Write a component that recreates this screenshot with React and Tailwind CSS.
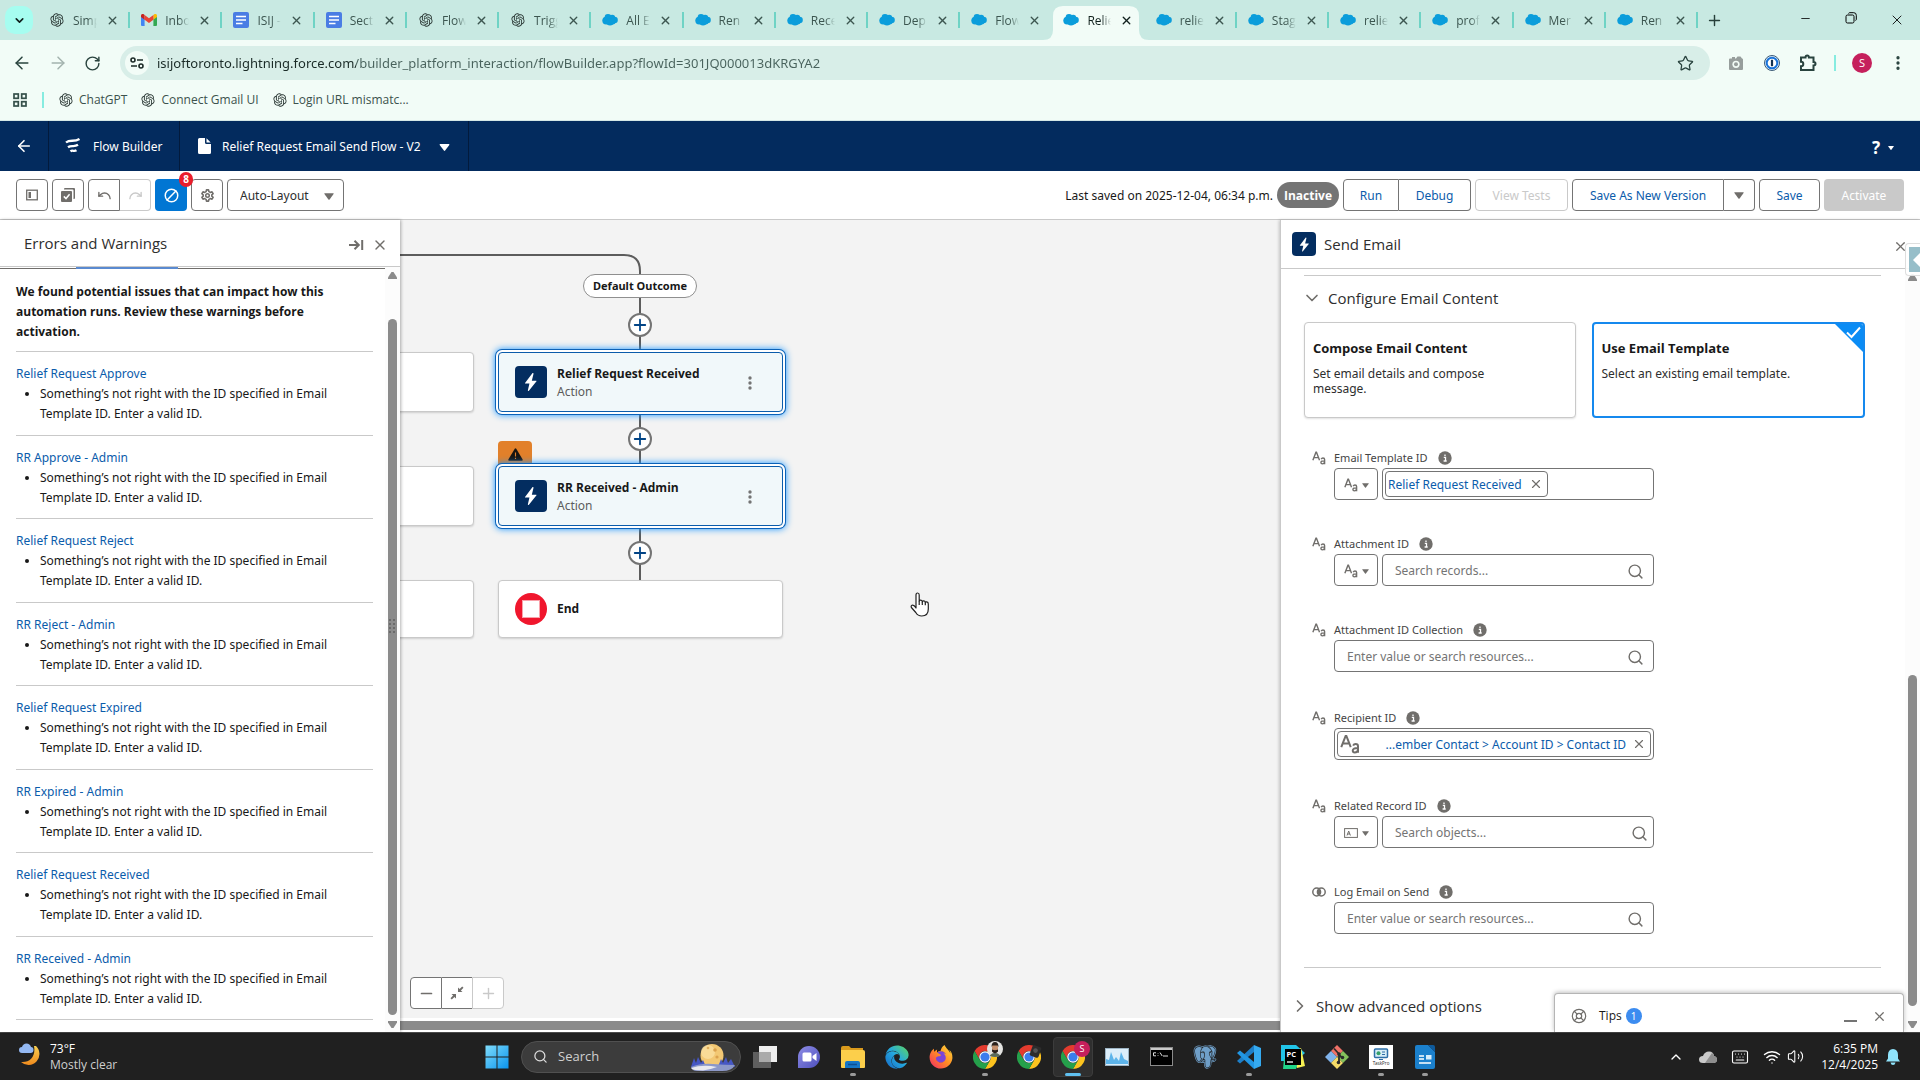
import React from "react";
import {
  ArrowLeft, ArrowRight, RotateCw, X, Plus, Minus, Star, Search, ChevronDown, ChevronRight, ChevronUp,
  Undo, Redo, Ban, LifeBuoy, Wifi, Volume2, Keyboard, MoreVertical,
} from "lucide-react";
import { RiOpenaiFill } from "react-icons/ri";
import { FaEdge, FaFirefoxBrowser } from "react-icons/fa";
import { BiLogoPostgresql } from "react-icons/bi";

const tabs = [
  ["gpt", "Simp"], ["gmail", "Inbo"], ["doc", "ISIJ -"], ["doc", "Sect"], ["gpt", "Flow"], ["gpt", "Trigg"],
  ["sf", "All E"], ["sf", "Ren"], ["sf", "Rece"], ["sf", "Dep"], ["sf", "Flow"], ["sf", "Relie", true],
  ["sf", "relie"], ["sf", "Stag"], ["sf", "relie"], ["sf", "prof"], ["sf", "Mer"], ["sf", "Ren"],
];

const warnings = [
  "Relief Request Approve", "RR Approve - Admin", "Relief Request Reject", "RR Reject - Admin",
  "Relief Request Expired", "RR Expired - Admin", "Relief Request Received", "RR Received - Admin",
];

/* ---------- small glyphs ---------- */

function Cloud() {
  return (
    <svg viewBox="0 0 16 16" className="size-4" fill="#0b9ddb">
      <circle cx="4.2" cy="8.6" r="3.9" /><circle cx="6" cy="5.4" r="3.4" /><circle cx="10.2" cy="5.8" r="3" />
      <circle cx="12.6" cy="8" r="3.2" /><circle cx="8" cy="10" r="3.6" /><circle cx="10.6" cy="9.6" r="3" />
    </svg>
  );
}

function Gmail() {
  return (
    <svg viewBox="0 0 16 12" className="h-3 w-4">
      <path d="M0 2v9a1 1 0 0 0 1 1h2.6V4.7z" fill="#4285f4" />
      <path d="M16 2v9a1 1 0 0 1-1 1h-2.6V4.7z" fill="#34a853" />
      <path d="M12.4 1v4.7L16 3V1.6C16 .2 14.400-.5 13.300.3z" fill="#fbbc04" />
      <path d="M0 3l3.600 2.700V1L2.700.300C1.600-.5 0 .2 0 1.600z" fill="#c5221f" />
      <path d="M3.600 5.700V1L8 4.300 12.400 1v4.700L8 9z" fill="#ea4335" />
    </svg>
  );
}

function Doc() {
  return (
    <svg viewBox="0 0 16 16" className="size-4">
      <rect width="16" height="16" rx="2" fill="#4a7de4" />
      <path d="M3 4.500h10M3 8h10M3 11.500h6.500" stroke="#fff" strokeWidth="1.500" />
    </svg>
  );
}

function Favicon({ kind }) {
  if (kind === "gpt") return <RiOpenaiFill className="size-4 text-[#2b3835]" />;
  if (kind === "gmail") return <Gmail />;
  if (kind === "doc") return <Doc />;
  return <Cloud />;
}

function Caret({ className = "h-2 w-3" }) {
  return (
    <svg viewBox="0 0 12 8" className={className} fill="currentColor">
      <path d="M1 0h10q1 0 .500 1L6.700 7.500q-.700.800-1.400 0L.500 1Q0 0 1 0z" />
    </svg>
  );
}

function Bolt({ className }) {
  return (
    <svg viewBox="0 0 24 24" className={className} fill="#fff">
      <path d="M13.500 2.500 5.500 13q-.400.700.400.700h4.400L8.600 21c-.200.900.600 1.200 1.100.500L18 11.300q.500-.800-.400-.800h-4.700l1.800-7.300c.200-.900-.700-1.400-1.200-.700z" />
    </svg>
  );
}

function TextType({ className = "size-4" }) {
  return (
    <svg viewBox="0 0 16 16" className={className} fill="none" stroke="currentColor" strokeWidth="1.600">
      <path d="M1 10.500 4.500 1.500h.6l3.500 9M2.300 7.600h5" />
      <path d="M10.500 9.300q.6-1.300 2-1.300 1.900 0 1.900 1.800V15M14.400 11.300q-4.200-.2-4.200 1.900 0 1.500 1.600 1.500 2.200 0 2.600-1.900" />
    </svg>
  );
}

function Info() {
  return (
    <svg viewBox="0 0 14 14" className="size-[14px]">
      <circle cx="7" cy="7" r="6.700" fill="#706e6b" />
      <path d="M5.800 6.300h1.700v3.600M5.600 10h3.100M7 3.400v1.500" stroke="#fff" strokeWidth="1.300" fill="none" />
    </svg>
  );
}

function Bookmark({ label }) {
  return (
    <a href="#" className="flex items-center gap-[5px]">
      <RiOpenaiFill className="size-4 text-[#2b3835]" />
      <span>{label}</span>
    </a>
  );
}

/* ---------- browser chrome ---------- */

function Tab({ kind, title, active, divider }) {
  return (
    <div className={"relative flex h-10 min-w-0 flex-1 items-center pl-[11px] " + (active ? "text-[#10201d]" : "text-[#3c5650]")}>
      {active && (
        <svg viewBox="0 0 106 34" className="absolute bottom-0 -left-[9px] h-[34px] w-[106px]" fill="#f2fcf7" preserveAspectRatio="none">
          <path d="M0 34q10 0 10-10V10Q10 0 20 0h66q10 0 10 10v14q0 10 10 10z" />
        </svg>
      )}
      <a href="#" className="relative flex min-w-0 items-center gap-2">
        <span className="flex size-4 shrink-0 items-center"><Favicon kind={kind} /></span>
        <span className="w-[24px] pt-px text-[12px] leading-5 whitespace-nowrap [mask-image:linear-gradient(90deg,#000_60%,transparent)]">{title}</span>
      </a>
      <button aria-label="Close tab" className="relative ml-[9px]"><X size={13} strokeWidth={2.500} /></button>
      {divider && <span className="absolute right-0 top-3 h-4 w-[2px] bg-[#6fd3c5]" />}
    </div>
  );
}

function Browser() {
  return (
    <header className="flex h-[121px] shrink-0 flex-col border-b border-[#d5e8e6] bg-[#f2fcf7] font-['Open_Sans',sans-serif]">
      <div className="flex h-10 bg-[#c8e9e2]">
        <div className="flex w-[38px] shrink-0 items-center justify-center">
          <button aria-label="Search tabs" className="flex h-7 w-7 items-center justify-center rounded-[10px] bg-[#a6fdf0] text-[#10201d]">
            <ChevronDown size={13} strokeWidth={3} />
          </button>
        </div>
        <div className="flex min-w-0 flex-1">
          {tabs.map(([kind, title, active], i) => (
            <Tab key={i} kind={kind} title={title} active={active} divider={!active && i !== 10} />
          ))}
        </div>
        <div className="flex w-[222px] shrink-0 items-center">
          <button aria-label="New tab" className="ml-2 text-[#26403a]"><Plus size={17} /></button>
          <div className="ml-auto flex text-black">
            <button aria-label="Minimize" className="flex w-[46px] justify-center"><Minus size={13} strokeWidth={1.500} /></button>
            <button aria-label="Restore" className="flex w-[46px] justify-center">
              <svg viewBox="0 0 12 12" className="size-3" fill="none" stroke="currentColor"><rect x="1" y="3" width="8" height="8" rx="1.500" /><path d="M3.500 1.500q.3-.8 1.200-.8h4q2.600 0 2.600 2.600v4q0 1-.8 1.200" /></svg>
            </button>
            <button aria-label="Close" className="flex w-[46px] justify-center"><X size={16} strokeWidth={1.300} /></button>
          </div>
        </div>
      </div>
      <div className="flex h-[46px] items-center text-[#29433e]">
        <div className="flex w-[120px] shrink-0 items-center gap-4 pl-3">
          <button aria-label="Back"><ArrowLeft size={20} strokeWidth={1.800} /></button>
          <button aria-label="Forward" className="text-[#a3b3ae]"><ArrowRight size={20} strokeWidth={1.800} /></button>
          <button aria-label="Reload"><RotateCw size={17} strokeWidth={2} /></button>
        </div>
        <div className="flex h-[34px] flex-1 items-center rounded-full bg-[#d8eee8] pr-4 pl-[5px]">
          <button aria-label="Site information" className="flex size-6 items-center justify-center rounded-full bg-[#f2fcf7]">
            <svg viewBox="0 0 14 14" className="size-[14px]" fill="none" stroke="#1c2b28" strokeWidth="1.600"><circle cx="3" cy="4" r="2" /><path d="M7 4h6M1 10h6" /><circle cx="11" cy="10" r="2" /></svg>
          </button>
          <input
            aria-label="Address"
            readOnly
            value="isijoftoronto.lightning.force.com/builder_platform_interaction/flowBuilder.app?flowId=301JQ000013dKRGYA2"
            className="ml-2 min-w-0 flex-1 bg-[linear-gradient(90deg,#1a2b27_199px,#48625c_199px)] bg-clip-text font-['Noto_Sans',sans-serif] text-[13px] leading-5 text-transparent outline-none"
          />
          <button aria-label="Bookmark"><Star size={17} strokeWidth={1.800} /></button>
        </div>
        <div className="flex w-[210px] shrink-0 items-center pl-[18px]">
          <button aria-label="Capture" className="w-4">
            <svg viewBox="0 0 16 16" className="size-4" fill="#979e9c"><path d="M1 4.500Q1 3.500 2 3.500h2V2h3v1.500h1L9.500 1.500h3L14 3.500q1 0 1 1V14q0 1-1 1H2q-1 0-1-1z" /><circle cx="8" cy="9.300" r="3.600" fill="#f2fcf7" /><circle cx="8" cy="9.300" r="2" /></svg>
          </button>
          <button aria-label="Password manager" className="ml-5">
            <svg viewBox="0 0 16 16" className="size-4"><circle cx="8" cy="8" r="7.500" fill="#dcecfb" stroke="#3c5a75" /><circle cx="8" cy="8" r="5.300" fill="#fff" stroke="#1a73d9" strokeWidth="2" /><path d="M8 4.800v6.400" stroke="#14314f" strokeWidth="2.200" /></svg>
          </button>
          <button aria-label="Extensions" className="ml-[18px]">
            <svg viewBox="0 0 20 20" className="size-5" fill="none" stroke="#29433e" strokeWidth="2"><path d="M3 4.500h4.500q0-2 1.700-2t1.700 2H15.500V9q2 0 2 1.700t-2 1.700V17H3v-3.700q2.300 0 2.300-2.300T3 8.700z" /></svg>
          </button>
          <span className="ml-4 h-4 w-[2px] bg-[#86ece0]" />
          <button aria-label="Profile" className="ml-4 flex size-5 items-center justify-center rounded-full bg-[#c5205c] text-[11px] text-white">S</button>
          <button aria-label="Menu" className="ml-[17px]"><MoreVertical size={18} strokeWidth={2.400} /></button>
        </div>
      </div>
      <nav className="flex h-[28px] items-center text-[12px] text-[#3c524d]">
        <svg viewBox="0 0 14 14" className="ml-[13px] size-[14px]" fill="none" stroke="#36504a" strokeWidth="1.700"><rect x="1" y="1" width="4.300" height="4.300" /><rect x="8.700" y="1" width="4.300" height="4.300" /><rect x="1" y="8.700" width="4.300" height="4.300" /><rect x="8.700" y="8.700" width="4.300" height="4.300" /></svg>
        <span className="ml-[15px] h-4 w-[2px] bg-[#86ece0]" />
        <div className="ml-[14px] flex gap-[13px]"><Bookmark label="ChatGPT" /><Bookmark label="Connect Gmail UI" /><Bookmark label="Login URL mismatc..." /></div>
      </nav>
    </header>
  );
}

/* ---------- builder header and toolbar ---------- */

function FlowHeader() {
  return (
    <div className="flex h-[50px] shrink-0 items-stretch bg-[#032b5e] text-[12px] text-white">
      <button aria-label="Back" className="flex w-12 items-center justify-center"><ArrowLeft size={18} strokeWidth={2.200} /></button>
      <div className="flex w-[132px] items-center gap-3 border-x border-[#021a3c] pl-4">
        <svg viewBox="0 0 16 16" className="size-4" fill="none" stroke="#fff" strokeWidth="2.300"><path d="M1 4.500C5 1 9 4.500 14.500 1M3 9.200c3.500-2.500 6 .3 10-2.400M5.500 13.300c2-1.600 3.500.500 6-1" /></svg>
        <span className="pt-px whitespace-nowrap">Flow Builder</span>
      </div>
      <button className="flex items-center border-r border-[#021a3c] pr-[18px] pl-[17px]">
        <svg viewBox="0 0 14 16" className="mr-[11px] h-4 w-[14px]" fill="#fff"><path d="M2.500 0H8v4.500Q8 6 9.500 6H14v8.500q0 1.500-1.500 1.500h-10Q1 16 1 14.500v-13Q1 0 2.500 0zM9.500.3 13.700 4.500H9.500z" /></svg>
        <span className="mr-[18px] pt-px whitespace-nowrap">Relief Request Email Send Flow - V2</span>
        <Caret className="mt-[2px] h-[7px] w-[11px]" />
      </button>
      <button aria-label="Help" className="ml-auto flex items-center gap-2 pt-1 pr-[26px] text-[17px] font-bold">?<Caret className="h-1 w-[6px]" /></button>
    </div>
  );
}

const iconBtn = "flex h-8 w-8 items-center justify-center border border-[#747474] text-[#706e6b]";
const blueBtn = "h-8 border border-[#747474] pt-px text-[12px] text-[#0b5cab] bg-white whitespace-nowrap";

function Toolbar() {
  return (
    <div className="flex h-[49px] shrink-0 items-center border-b border-[#c9c9c9] bg-white px-4">
      <div className="flex items-center gap-1">
        <button aria-label="Toggle toolbox" className={iconBtn + " rounded"}>
          <svg viewBox="0 0 12 12" className="size-3"><rect x=".7" y="1.200" width="10.600" height="9.600" fill="none" stroke="currentColor" strokeWidth="1.300" /><path d="M2.500 3h2.500v6H2.500z" fill="currentColor" /></svg>
        </button>
        <button aria-label="Select elements" className={iconBtn + " rounded"}>
          <svg viewBox="0 0 14 14" className="size-[14px]" fill="currentColor"><path d="M4 0h9q1 0 1 1v9q0 1-1 1h-.500V2.500Q12.500 1.500 11.500 1.500H3V1q0-1 1-1z" /><rect y="3" width="11" height="11" rx="1" /><path d="M2.800 8.400 5 10.600 8.600 6.300" fill="none" stroke="#fff" strokeWidth="1.500" /></svg>
        </button>
        <div className="flex">
          <button aria-label="Undo" className={iconBtn + " rounded-l"}><Undo size={15} strokeWidth={2.200} /></button>
          <button disabled aria-label="Redo" className="flex h-8 w-[31px] items-center justify-center rounded-r border border-l-0 border-[#c9c9c9] text-[#c9c9c9]"><Redo size={15} strokeWidth={2.200} /></button>
        </div>
        <button aria-label="Errors and warnings, 8" className="relative flex h-8 w-8 items-center justify-center rounded bg-[#0176d3] text-white">
          <Ban size={15} strokeWidth={2.400} className="rotate-90" />
          <span className="absolute -top-[7px] -right-[6px] flex h-[15px] w-[14px] items-center justify-center rounded-full bg-[#ea1d2c] text-[10px] font-bold">8</span>
        </button>
        <button aria-label="Settings" className={iconBtn + " rounded"}>
          <svg viewBox="0 0 16 16" className="size-[15px]" fill="none" stroke="currentColor">
            <path d="M6.900 1h2.200l.4 1.900 1.500.8 1.800-.6 1.200 1.900-1.400 1.300v1.400l1.400 1.300-1.200 1.900-1.800-.6-1.500.8L9.100 13H6.900l-.4-1.900-1.500-.8-1.800.6L2 9l1.400-1.300V6.300L2 5l1.200-1.900 1.800.6 1.500-.8z" strokeWidth="1.700" strokeLinejoin="round" transform="translate(0 1)" /><circle cx="8" cy="8" r="1.900" strokeWidth="1.600" />
          </svg>
        </button>
        <div className="relative flex items-center text-[#706e6b]">
          <select aria-label="Layout" className="h-8 w-[117px] appearance-none rounded border border-[#747474] bg-white pt-px pl-3 text-[12px] text-[#2e2e2e]"><option>Auto-Layout</option></select>
          <Caret className="pointer-events-none absolute top-[14px] right-[10px] h-[7px] w-[10px]" />
        </div>
      </div>
      <div className="ml-auto flex items-center gap-1">
        <span className="pt-px text-[12px] whitespace-nowrap text-[#181818]">Last saved on 2025-12-04, 06:34 p.m.</span>
        <span className="flex h-[26px] w-[62px] items-center justify-center rounded-full bg-[#747474] pt-px font-['Open_Sans',sans-serif] text-[12px] font-bold text-white">Inactive</span>
        <div className="flex">
          <button className={blueBtn + " w-[56px] rounded-l"}>Run</button>
          <button className={blueBtn + " w-[72px] rounded-r border-l-0"}>Debug</button>
        </div>
        <button disabled className="h-8 w-[93px] rounded border border-[#c9c9c9] pt-px text-[12px] whitespace-nowrap text-[#c9c9c9]">View Tests</button>
        <div className="flex">
          <button className={blueBtn + " w-[152px] rounded-l"}>Save As New Version</button>
          <button aria-label="More save options" className="flex h-8 w-[31px] items-center justify-center rounded-r border border-l-0 border-[#747474] text-[#706e6b]"><Caret className="h-[7px] w-[10px]" /></button>
        </div>
        <button className={blueBtn + " w-[61px] rounded"}>Save</button>
        <button disabled className="h-8 w-20 rounded bg-[#c9c9c9] pt-px text-[12px] text-white">Activate</button>
      </div>
    </div>
  );
}

/* ---------- left panel ---------- */

function Tri({ down }) {
  return (
    <svg viewBox="0 0 9 7" className="h-[7px] w-[9px]" fill="#8b8b8b">{down ? <path d="M0 0h9v1.500L5.500 7h-2L0 1.500z" /> : <path d="M0 7h9V5.500L5.500 0h-2L0 5.500z" />}</svg>
  );
}

function Errors() {
  return (
    <aside className="z-10 flex w-[400px] shrink-0 flex-col bg-white shadow-[1px_0_3px_rgba(0,0,0,0.3)]">
      <div className="flex h-[47px] shrink-0 items-center border-b border-[#c9c9c9] pr-3 pl-6">
        <h2 className="font-['Open_Sans',sans-serif] text-[15px] text-[#2e2e2e]">Errors and Warnings</h2>
        <button aria-label="Dock panel" className="ml-auto text-[#706e6b]">
          <svg viewBox="0 0 15 12" className="mt-1 h-3 w-[15px]" fill="none" stroke="currentColor" strokeWidth="2"><path d="M0 6h9.500M5.500 1.700 9.800 6l-4.300 4.300M13.200 1v10" /></svg>
        </button>
        <button aria-label="Close panel" className="ml-2 text-[#706e6b]"><X size={16} strokeWidth={2} className="mt-1" /></button>
      </div>
      <div className="flex min-h-0 flex-1">
        <div className="flex min-w-0 flex-1 flex-col">
          <div className="flex h-[2px] w-full items-center"><span className="h-px w-[76px] bg-[#706e6b]" /><span className="h-[2px] w-[102px] bg-[#5a8ad0]" /><span className="h-px flex-1 bg-[#706e6b]" /></div>
          <p className="mb-[9px] ml-4 w-[330px] pt-[13px] font-['Open_Sans',sans-serif] text-[12px] leading-[20px] font-bold text-[#181818]">We found potential issues that can impact how this automation runs. Review these warnings before activation.</p>
          <ul className="mr-3 ml-4 flex min-h-0 flex-1 flex-col border-b border-[#c9c9c9] text-[12px] leading-5">
            {warnings.map((w) => (
              <li key={w} className="min-h-0 flex-1 border-t border-[#c9c9c9] pt-3">
                <a href="#" className="block text-[#0b5cab]">{w}</a>
                <ul className="list-disc pl-6 text-[#181818]"><li className="w-[310px]">Something’s not right with the ID specified in Email Template ID. Enter a valid ID.</li></ul>
              </li>
            ))}
          </ul>
          <div className="h-3" />
        </div>
        <div className="flex w-[15px] flex-col items-center bg-[#fcfcfc] pt-[5px] pb-1">
          <Tri />
          <div className="mt-10 mb-[6px] flex w-[9px] flex-1 flex-col items-center rounded-full bg-[#8b8b8b]">
            <svg viewBox="0 0 7 14" className="mt-[300px] h-[14px] w-[7px]" fill="#6a6a6a"><path d="M0 0h2v2H0zM4 0h2v2H4zM0 4h2v2H0zM4 4h2v2H4zM0 8h2v2H0zM4 8h2v2H4zM0 12h2v2H0zM4 12h2v2H4z" /></svg>
          </div>
          <Tri down />
        </div>
      </div>
    </aside>
  );
}

/* ---------- canvas ---------- */

function AddNode({ className }) {
  return (
    <button aria-label="Add element" className={"absolute left-[228px] flex size-6 items-center justify-center rounded-full border-2 border-[#747474] bg-white text-[#014486] " + className}><Plus size={18} strokeWidth={2.400} /></button>
  );
}

function ActionNode({ title, className }) {
  return (
    <div className={"absolute left-[98px] flex h-[60px] w-[285px] items-center rounded border border-[#0b5cab] bg-[#f1f8fa] pl-4 shadow-[0_0_0_2px_#fff,0_0_0_3px_#0b62b8,0_0_7px_3px_#1b96ff] " + className}>
      <span className="flex size-8 items-center justify-center rounded bg-[#032d60]"><Bolt className="size-[22px]" /></span>
      <div className="ml-[10px] pt-[2px] leading-[18px]">
        <div className="font-['Open_Sans',sans-serif] text-[12px] font-bold text-[#181818]">{title}</div>
        <div className="text-[12px] text-[#5c5c5c]">Action</div>
      </div>
      <button aria-label="More actions" className="mr-[30px] ml-auto pt-[2px]"><svg viewBox="0 0 4 14" className="h-[14px] w-1" fill="#747474"><circle cx="2" cy="2" r="1.700" /><circle cx="2" cy="7" r="1.700" /><circle cx="2" cy="12" r="1.700" /></svg></button>
    </div>
  );
}

const plainNode = "absolute rounded border border-[#c9c9c9] bg-white shadow-[0_1px_2px_rgba(0,0,0,0.15)] ";

function Canvas() {
  return (
    <main className="flex min-w-0 flex-1 flex-col">
      <div className="relative min-h-0 flex-1 overflow-hidden bg-[#f3f3f3]">
        <svg className="absolute top-0 left-0 h-[400px] w-[400px]" viewBox="0 0 400 400" fill="none" stroke="#5c5c5c" strokeWidth="2"><path d="M0 35H224Q240 35 240 51V362" /></svg>
        <div className={plainNode + "top-[132px] -left-[209px] h-[60px] w-[283px]"} />
        <div className={plainNode + "top-[246px] -left-[209px] h-[60px] w-[283px]"} />
        <div className={plainNode + "top-[360px] -left-[209px] h-[58px] w-[283px]"} />
        <div className="absolute top-[54px] left-[183px] flex h-6 w-[114px] items-center justify-center rounded-full border border-[#8f8f8f] bg-white pt-px text-[11px] font-bold whitespace-nowrap text-[#181818]">Default Outcome</div>
        <AddNode className="top-[93px]" />
        <AddNode className="top-[207px]" />
        <AddNode className="top-[321px]" />
        <div className="absolute top-[221px] left-[98px] flex h-[26px] w-[34px] justify-center rounded-t bg-[#e2802a] pt-[7px]">
          <svg viewBox="0 0 16 14" className="h-[13px] w-[15px]"><path d="M7.200.800 .300 12.500Q0 13.600 1 13.600h14q1 0 .700-1.100L8.800.800Q8-.300 7.200.800z" fill="#181410" /><path d="M8 4.800v4.400M8 10.400v1.500" stroke="#e2802a" strokeWidth="1.200" /></svg>
        </div>
        <ActionNode title="Relief Request Received" className="top-[132px]" />
        <ActionNode title="RR Received - Admin" className="top-[246px]" />
        <div className={plainNode + "top-[360px] left-[98px] flex h-[58px] w-[285px] items-center pl-4"}>
          <span className="flex size-8 items-center justify-center rounded-full bg-[#f0162d]"><span className="size-[18px] border border-[#f9a3ab] bg-white" /></span>
          <span className="ml-[10px] font-['Open_Sans',sans-serif] text-[12px] font-bold text-[#181818]">End</span>
        </div>
        <svg viewBox="0 0 20 25" className="absolute top-[372px] left-[510px] h-[25px] w-5" fill="#fff" stroke="#222" strokeWidth="1.200" strokeLinejoin="round"><path d="M6 14V3q0-2 1.600-2T9.200 3v6.500q.2-1.500 1.600-1.300 1.500.2 1.500 1.800.2-1.300 1.600-1.100 1.400.2 1.400 1.800.2-1 1.500-.8 1.500.3 1.500 2V17q0 7-6.500 7-4 0-6-3.500L1.400 15.500q-.7-1.500.6-2.200Q4 12.600 6 16z" /><path d="M12.300 10v3M15.300 10.700v2.500M9.200 9.500V13" /></svg>
        <div className="absolute bottom-[9px] left-[10px] flex">
          <button aria-label="Zoom out" className={iconBtn + " rounded-l bg-white"}><Minus size={17} strokeWidth={2.400} /></button>
          <button aria-label="Zoom to fit" className="flex h-8 w-[30px] items-center justify-center border-y border-[#747474] bg-white text-[#706e6b]">
            <svg viewBox="0 0 14 14" className="size-[14px]" fill="currentColor"><path d="M8 1.500V6h4.500L10.900 4.400 13.500 1.800 12.200.5 9.600 3.100zM6 12.500V8H1.500l1.600 1.600L.5 12.200l1.300 1.300 2.600-2.600z" /></svg>
          </button>
          <button disabled aria-label="Zoom in" className="flex h-8 w-8 items-center justify-center rounded-r border border-[#c9c9c9] bg-white text-[#c9c9c9]"><Plus size={17} strokeWidth={2} /></button>
        </div>
      </div>
      <div className="h-[14px] shrink-0 bg-white pt-[3px] pb-[2px]"><div className="h-full bg-[#8b8b8b]" /></div>
    </main>
  );
}

/* ---------- right panel ---------- */

const box = "flex h-8 items-center rounded border border-[#747474] bg-white";

function FieldLabel({ id, label, toggle }) {
  return (
    <div className="flex h-5 items-center text-[#706e6b]">
      <span className="flex w-[22px] shrink-0 items-center">
        {toggle ? <svg viewBox="0 0 14 12" className="h-3 w-[14px]" fill="none" stroke="currentColor" strokeWidth="1.500"><circle cx="4.700" cy="6" r="3.900" /><circle cx="9.300" cy="6" r="3.900" /><path d="M7 3.500v5" strokeWidth="2.500" /></svg> : <TextType className="size-[14px]" />}
      </span>
      <label htmlFor={id} className="text-[11px] text-[#444]">{label}</label>
      <button aria-label={"About " + label} className="ml-[10px]"><Info /></button>
    </div>
  );
}

function TypeButton({ record }) {
  return (
    <button aria-label="Choose value type" aria-haspopup="listbox" className={box + " w-11 shrink-0 justify-center gap-1 pt-[2px] text-[#706e6b]"}>
      {record ? <svg viewBox="0 0 14 10" className="h-[10px] w-[14px]" fill="none" stroke="currentColor"><rect x=".6" y=".6" width="12.800" height="8.800" /><path d="M3 7.500 4.700 3l1.700 4.500M3.500 6h2.400" /></svg> : <TextType className="size-[14px]" />}
      <Caret className="h-[5px] w-[7px]" />
    </button>
  );
}

function Field({ id, label, toggle, type, placeholder, pill, full, className }) {
  return (
    <div className={"flex flex-col " + className}>
      <FieldLabel id={id} label={label} toggle={toggle} />
      <div className="ml-[22px] flex w-80 gap-1">
        {type && <TypeButton record={type === "record"} />}
        <div className={box + " min-w-0 flex-1 " + (pill ? "px-[2px]" : "pl-3 " + (type === "record" ? "pr-[5px]" : "pr-[9px]"))}>
          {pill ? (
            <>
              <span className={"flex h-[26px] items-center rounded border border-[#747474] text-[12px] whitespace-nowrap text-[#0b5cab] " + (full ? "w-full shrink-0 pr-[4px] pl-[2px]" : "w-[163px] shrink-0 pr-[4px] pl-[2px]")}>
                {full && <TextType className="size-5 text-[#706e6b]" />}
                <span className={full ? "ml-auto pt-px" : "pt-px"}>{pill}</span>
                <button aria-label="Remove" className={full ? "ml-[6px] text-[#706e6b]" : "ml-auto text-[#706e6b]"}><X size={14} strokeWidth={2} /></button>
              </span>
              <input id={id} className={full ? "w-0" : "min-w-0 flex-1 outline-none"} />
            </>
          ) : (
            <>
              <input id={id} placeholder={placeholder} className="min-w-0 flex-1 pt-px text-[12px] outline-none placeholder:text-[#747474]" />
              <Search size={17} strokeWidth={2} className="mt-[3px] text-[#706e6b]" />
            </>
          )}
        </div>
      </div>
    </div>
  );
}

function Choice({ title, text, checked }) {
  return (
    <label className={"relative flex h-24 flex-1 flex-col overflow-hidden rounded bg-white pl-2 " + (checked ? "border-2 border-[#1589ee] pt-[14px]" : "border border-[#c9c9c9] pt-[15px] shadow-[0_1px_2px_rgba(0,0,0,0.12)]")}>
      <input type="radio" name="content" defaultChecked={checked} className="sr-only" />
      <span className="font-['Open_Sans',sans-serif] text-[13px] leading-5 font-bold text-[#181818]">{title}</span>
      <span className="mt-2 w-[200px] text-[12px] leading-[15px] whitespace-normal text-[#2e2e2e]">{text}</span>
      {checked && (
        <svg viewBox="0 0 28 28" className="absolute top-0 right-0 size-7"><path d="M0 0h28v28z" fill="#0a8cf5" /><path d="m12 8.500 4.500 4.500L25 3.500" fill="none" stroke="#fff" strokeWidth="2" /></svg>
      )}
    </label>
  );
}

function SendEmail() {
  return (
    <aside className="relative z-10 flex w-[640px] shrink-0 flex-col border-l border-[#c9c9c9] bg-white shadow-[-1px_0_3px_rgba(0,0,0,0.2)]">
      <div className="flex h-[49px] shrink-0 items-center border-b border-[#c9c9c9] pr-3 pl-[11px]">
        <span className="flex size-6 items-center justify-center rounded bg-[#032d60]"><Bolt className="size-[17px]" /></span>
        <h2 className="ml-2 font-['Open_Sans',sans-serif] text-[15px] text-[#2e2e2e]">Send Email</h2>
        <button aria-label="Close" className="mt-1 ml-auto text-[#706e6b]"><X size={15} strokeWidth={2} /></button>
      </div>
      <div className="flex min-h-0 flex-1">
        <div className="min-w-0 flex-1 overflow-hidden pt-[6px] pl-[23px]">
          <section className="mr-6 border-y border-[#c9c9c9] pb-[33px]">
            <button className="mt-[10px] flex h-6 items-center gap-1 font-['Open_Sans',sans-serif] text-[15px] text-[#2e2e2e]"><ChevronDown size={20} strokeWidth={2} className="-ml-[2px] text-[#706e6b]" /><span className="ml-[2px]">Configure Email Content</span></button>
            <fieldset className="mt-3 mr-4 flex gap-4">
              <Choice title="Compose Email Content" text="Set email details and compose message." />
              <Choice title="Use Email Template" text="Select an existing email template." checked />
            </fieldset>
            <div className="mt-[30px] ml-2 flex flex-col">
              <Field id="tpl" label="Email Template ID" type="text" pill="Relief Request Received" className="mb-[34px]" />
              <Field id="att" label="Attachment ID" type="text" placeholder="Search records..." className="mb-[34px]" />
              <Field id="col" label="Attachment ID Collection" placeholder="Enter value or search resources..." className="mb-9" />
              <Field id="rec" label="Recipient ID" pill="...ember Contact > Account ID > Contact ID" full className="mb-9" />
              <Field id="rel" label="Related Record ID" type="record" placeholder="Search objects..." className="mb-[34px]" />
              <Field id="log" label="Log Email on Send" toggle placeholder="Enter value or search resources..." className="" />
            </div>
          </section>
          <button className="mt-[26px] -ml-[14px] flex h-6 items-center font-['Open_Sans',sans-serif] text-[15px] text-[#2e2e2e]"><ChevronRight size={20} strokeWidth={2} className="text-[#706e6b]" /><span className="ml-[6px]">Show advanced options</span></button>
        </div>
        <div className="flex w-[15px] flex-col items-center bg-[#fcfcfc] pt-[5px] pb-1">
          <Tri />
          <div className="h-[394px] shrink" />
          <div className="mb-[15px] w-[9px] flex-1 rounded-full bg-[#8b8b8b]" />
          <Tri down />
        </div>
      </div>
      <div className="absolute right-4 bottom-0 flex h-[39px] w-[350px] items-center rounded-t border border-b-0 border-[#b5b5b5] bg-white pt-[6px] pl-4 shadow-[0_-1px_4px_rgba(0,0,0,0.25)]">
        <LifeBuoy size={16} strokeWidth={1.800} className="text-[#706e6b]" />
        <span className="ml-3 font-['Open_Sans',sans-serif] text-[12px] text-[#181818]">Tips</span>
        <span className="ml-1 flex size-4 items-center justify-center rounded-full bg-[#3c8cf0] text-[10px] text-white">1</span>
        <button aria-label="Minimize tips" className="ml-auto h-3 w-[13px] border-b-2 border-[#747474]" />
        <button aria-label="Close tips" className="mr-4 ml-[15px] text-[#706e6b]"><X size={15} strokeWidth={2} /></button>
      </div>
      <button aria-label="Expand side tray" className="absolute top-[23px] right-0 h-[33px] w-[15px] rounded-l border border-r-0 border-[#dedede] bg-white/90 py-[3px] pl-[3px]">
        <span className="flex h-full items-center justify-end bg-[#97bec9]"><svg viewBox="0 0 8 14" className="h-[14px] w-2" fill="#fff"><path d="M8 0v14L1 7z" /></svg></span>
      </button>
    </aside>
  );
}

/* ---------- taskbar ---------- */

function Chrome() {
  return (
    <svg viewBox="0 0 24 24" className="size-6">
      <path d="M1.600 6A12 12 0 0 1 22.400 6H12A6 6 0 0 0 6.800 15z" fill="#e33b2e" />
      <path d="M22.400 6A12 12 0 0 1 12 24L17.200 15A6 6 0 0 0 12 6z" fill="#fcc31e" />
      <path d="M12 24A12 12 0 0 1 1.600 6L6.800 15A6 6 0 0 0 17.200 15z" fill="#25a04b" />
      <circle cx="12" cy="12" r="5.800" fill="#fff" /><circle cx="12" cy="12" r="4.600" fill="#3b7ded" />
    </svg>
  );
}

function AppButton({ label, run, active, children }) {
  return (
    <button aria-label={label} className="relative flex h-12 w-11 items-center justify-center">
      {active && <span className="absolute top-1 left-[2px] h-10 w-10 rounded border border-[#3c3c3c] bg-[#2f2f2f]" />}
      <span className="relative">{children}</span>
      {run && <span className="absolute bottom-[5px] h-[3px] w-[6px] rounded-full bg-[#9a9a9a]" />}
      {active && <span className="absolute bottom-[5px] h-[3px] w-4 rounded-full bg-[#60c0f0]" />}
    </button>
  );
}

function Taskbar() {
  return (
    <footer className="flex h-12 shrink-0 items-center border-t border-[#4a4a4a] bg-[#202020] font-['Open_Sans',sans-serif] text-[12px] text-white">
      <div className="flex flex-1 items-center pl-[18px]">
        <svg viewBox="0 0 24 24" className="-mt-1 size-6">
          <defs><linearGradient id="moon" x1="0" y1="0" x2="0" y2="1"><stop offset="0" stopColor="#f7cf52" /><stop offset="1" stopColor="#ef8a1d" /></linearGradient></defs>
          <path d="M18 3a10.500 10.500 0 1 1-15 16C12 20 18 13 16 3z" fill="url(#moon)" />
          <path d="M4 10q-3 0-3-3t3-3q1-3.500 4.500-3.500T13 4q2.500.200 2.500 3t-3 3z" fill="#93b8f3" />
        </svg>
        <div className="ml-2 text-[12px] leading-4"><div>73°F</div><div className="text-[#cfcfcf]">Mostly clear</div></div>
      </div>
      <div className="ml-1 flex items-center">
        <AppButton label="Start">
          <svg viewBox="0 0 24 24" className="size-6"><defs><linearGradient id="win" x1="0" y1="0" x2="1" y2="1"><stop offset="0" stopColor="#7fdcfb" /><stop offset="1" stopColor="#0a94ee" /></linearGradient></defs><path d="M.5.500h11v11H.5zM12.500.500h11v11h-11zM.5 12.500h11v11H.5zM12.500 12.500h11v11h-11z" fill="url(#win)" /></svg>
        </AppButton>
        <label className="mx-[2px] flex h-8 w-[220px] items-center rounded-full border border-[#505050] bg-[#3c3c3c] pr-1 pl-[11px]">
          <Search size={15} strokeWidth={2} className="text-[#dedede]" />
          <input aria-label="Search" placeholder="Search" className="ml-[10px] min-w-0 flex-1 bg-transparent text-[13px] outline-none placeholder:text-[#d0d0d0]" />
          <svg viewBox="0 0 46 28" className="h-7 w-[46px]">
            <circle cx="22" cy="12.500" r="11.500" fill="#f3c873" /><circle cx="18" cy="9" r="7" fill="#fbe3a6" opacity=".7" /><circle cx="25" cy="7" r="1.800" fill="#dba24f" /><circle cx="27" cy="14" r="1.600" fill="#dba24f" /><circle cx="18" cy="5" r="1.300" fill="#e0ad5c" />
            <path d="M1 24 4 15l2 5 2-6 3 6 2-3 3 7zM28 24l3-8 2 4 3-6 2 6 3-4 4 8z" fill="#4657c4" />
            <path d="M1 24q10-4 22-3t22 1q-3 6-13 6H7q-5 0-6-4z" fill="#8c98c8" /><path d="M1 25q12-4 26-1-8 3-14 3.500L5 27q-3-.500-4-2z" fill="#e9e9ee" />
          </svg>
        </label>
        <AppButton label="Task view"><svg viewBox="0 0 24 24" className="size-6"><rect x="6" y="1" width="18" height="16" fill="#eee" /><rect x="0" y="7" width="18" height="16" fill="#666" opacity=".9" /><rect x="6" y="7" width="12" height="10" fill="#aaa" /></svg></AppButton>
        <AppButton label="Chat"><svg viewBox="0 0 24 24" className="size-6"><defs><linearGradient id="chat" x1="0" y1="0" x2="1" y2="1"><stop offset="0" stopColor="#8f8de6" /><stop offset="1" stopColor="#4d4fbd" /></linearGradient></defs><path d="M12 1a11 11 0 1 1 0 22H1V12A11 11 0 0 1 12 1z" fill="url(#chat)" /><rect x="5.500" y="7.500" width="9" height="9" rx="1.500" fill="#fff" /><path d="m15.500 11 4-3v8l-4-3z" fill="#fff" /></svg></AppButton>
        <AppButton label="File Explorer" run><svg viewBox="0 0 24 24" className="size-6"><path d="M0 3q0-2 2-2h6l2 2h12v5H0z" fill="#d99a1c" /><path d="M0 5h22q2 0 2 2v15q0 1-1 1H1q-1 0-1-1z" fill="#fccf4b" /><path d="M4 23v-5q0-2 2-2h11q2 0 2 2v5z" fill="#1576c6" /><path d="M7 19.500h9" stroke="#0c4f93" strokeWidth="1.500" /></svg></AppButton>
        <AppButton label="Edge"><svg width="0" height="0" className="absolute"><defs><linearGradient id="edge" x1="0" y1="1" x2="1" y2="0"><stop offset="0" stopColor="#1668c4" /><stop offset=".5" stopColor="#25a8e0" /><stop offset="1" stopColor="#5fd85a" /></linearGradient><linearGradient id="fox" x1="1" y1="0" x2="0" y2="1"><stop offset="0" stopColor="#ffdf3c" /><stop offset=".5" stopColor="#ff8a25" /><stop offset="1" stopColor="#f4256a" /></linearGradient></defs></svg><FaEdge className="size-6" fill="url(#edge)" /></AppButton>
        <AppButton label="Firefox"><span className="absolute top-[6px] left-[6px] size-3 rounded-full bg-[#7a44d8]" /><FaFirefoxBrowser className="relative size-6" fill="url(#fox)" /></AppButton>
        <AppButton label="Chrome profile 1" run><Chrome /><svg viewBox="0 0 16 16" className="absolute -top-1 left-[14px] size-4"><circle cx="8" cy="8" r="8" fill="#e4e4e2" /><path d="M2.500 14.500Q8 9 13.500 14.500 8 17.500 2.500 14.500z" fill="#5a6a5a" /><rect x="5" y="3" width="6" height="9" rx="3" fill="#c38e6b" /><path d="M4.500 6q0-5 3.500-5t3.500 5L10.500 4.500h-5zM5 8.500q3 1.500 6 0v2Q8 14 5 10.500z" fill="#2a211c" /></svg></AppButton>
        <AppButton label="Chrome profile 2"><Chrome /><svg viewBox="0 0 14 14" className="absolute top-0 left-3 size-[13px]"><rect x="2" y="1" width="10" height="12" rx="2" fill="#2c2c2c" transform="rotate(20 7 7)" /><circle cx="7" cy="6" r="2.500" fill="#555" /></svg></AppButton>
        <AppButton label="Chrome profile S" active><Chrome /><span className="absolute -top-1 left-[13px] flex size-4 items-center justify-center rounded-full bg-[#c5205c] text-[9px]">S</span></AppButton>
        <AppButton label="Task Manager"><svg viewBox="0 0 24 18" className="h-[18px] w-6"><rect x=".5" y=".5" width="23" height="17" fill="#dceefa" stroke="#9db4c4" /><path d="M1 16V11l3 1 2-8 3 8 2-3 3 4 2-9 3 7 4 2v3z" fill="#5db4ea" /></svg></AppButton>
        <AppButton label="Terminal"><svg viewBox="0 0 23 19" className="h-[19px] w-[23px]"><rect x=".5" y=".5" width="22" height="18" fill="#000" stroke="#8b8b8b" /><path d="M1 2h21" stroke="#c9c9c9" strokeWidth="2" /><path d="M6 5.800H3.500v3H6M8 6v.500M8 8v.700M10 5.500l2.200 3.500M13 9h5" stroke="#ddd" fill="none" /></svg></AppButton>
        <AppButton label="pgAdmin"><BiLogoPostgresql className="size-7 text-[#6f9fc8]" /></AppButton>
        <AppButton label="VS Code" run><svg viewBox="0 0 24 24" className="size-6"><path d="M17 0 24 3v18l-7 3z" fill="#35aaf0" /><path d="M17 0v7L3 18.500 0 16z" fill="#1d7fc9" /><path d="M17 24v-7L3 5.500 0 8z" fill="#2196e3" /></svg></AppButton>
        <AppButton label="PyCharm"><svg viewBox="0 0 24 24" className="size-6"><path d="M0 0h15l9 8-9 8H0z" fill="#21c4e8" /><path d="M9 9 20 3l4 18-8 2z" fill="#f6f052" /><path d="M2 24 3 14h15l-3 10z" fill="#20d68a" /><rect x="4" y="4" width="16" height="16" fill="#000" /><text x="5.500" y="12" fontSize="7.500" fontWeight="700" fill="#fff" fontFamily="Open Sans">PC</text><path d="M6 17h6" stroke="#fff" strokeWidth="1.300" /></svg></AppButton>
        <AppButton label="Git Bash"><svg viewBox="0 0 24 24" className="size-6"><path d="m12 0 6 6-6 6-6-6z" fill="#f07167" /><path d="m6 6 6 6-6 6-6-6z" fill="#80b3ec" /><path d="m18 6 6 6-6 6-6-6z" fill="#84c05c" /><path d="m12 12 6 6-6 6-6-6z" fill="#f5dc68" /><path d="M9 3.500 14 9v8M13 9l4 3.500" stroke="#2b2b2b" strokeWidth="1.800" fill="none" /><circle cx="14" cy="9" r="1.800" fill="#2b2b2b" /><circle cx="17.500" cy="12.500" r="1.800" fill="#2b2b2b" /><circle cx="13.500" cy="17.500" r="1.800" fill="#2b2b2b" /></svg></AppButton>
        <AppButton label="TaskPro" run><svg viewBox="0 0 24 24" className="size-6"><rect width="24" height="24" fill="#fff" /><rect x="5.500" y="4" width="13" height="8.500" rx="1" fill="#d7edf7" stroke="#2d6fa8" strokeWidth="1.500" /><circle cx="9.500" cy="8.300" r="2" fill="#35a06a" /><path d="M13 7h3M13 9.500h3M10 14.500h4" stroke="#2d6fa8" strokeWidth="1.200" /><text x="12" y="20" fontSize="4.500" textAnchor="middle" fill="#222" fontFamily="Open Sans">TaskPro</text></svg></AppButton>
        <AppButton label="LibreOffice Writer" run><svg viewBox="0 0 20 24" className="h-6 w-5"><path d="M2 0h11l7 7v15q0 2-2 2H2q-2 0-2-2V2q0-2 2-2z" fill="#1b80cc" /><path d="M13 0h5q2 0 2 2v5z" fill="#0e5a9c" /><path d="M4 11h5M4 14h5M4 18h12" stroke="#fff" strokeWidth="1.500" /><rect x="11" y="10" width="5.500" height="4.500" fill="#d7edfb" /></svg></AppButton>
      </div>
      <div className="flex flex-1 items-center justify-end pr-5">
        <button aria-label="Hidden icons"><ChevronUp size={16} strokeWidth={2} /></button>
        <svg viewBox="0 0 18 12" className="ml-[15px] h-3 w-[18px]"><path d="M4 12q-4 0-4-3.500T4 5q1.500-4.500 6-4.500T15 5q3 .500 3 3.500T15 12z" fill="#c9c9c9" /><path d="M6 12 13 2q2 1 2 3 3 .500 3 3.500T15 12z" fill="#8f8f8f" /></svg>
        <Keyboard size={18} strokeWidth={1.500} className="ml-[14px]" />
        <Wifi size={18} strokeWidth={1.800} className="ml-[14px]" />
        <Volume2 size={17} strokeWidth={1.500} className="ml-[6px]" />
        <div className="ml-[17px] text-right text-[12px] leading-4"><div>6:35 PM</div><div>12/4/2025</div></div>
        <svg viewBox="0 0 14 16" className="ml-2 h-4 w-[14px]" fill="#8fe3fb"><path d="M7 0q5 .300 5 6v3.500l2 3H0l2-3V6Q2 .300 7 0zM4.500 13.500h5Q9 16 7 16t-2.500-2.500z" /></svg>
      </div>
    </footer>
  );
}

export default function App() {
  return (
    <div className="flex h-screen flex-col overflow-hidden bg-white font-['Noto_Sans','Open_Sans',sans-serif]">
      <Browser />
      <FlowHeader />
      <Toolbar />
      <div className="flex min-h-0 flex-1">
        <Errors />
        <Canvas />
        <SendEmail />
      </div>
      <Taskbar />
    </div>
  );
}
